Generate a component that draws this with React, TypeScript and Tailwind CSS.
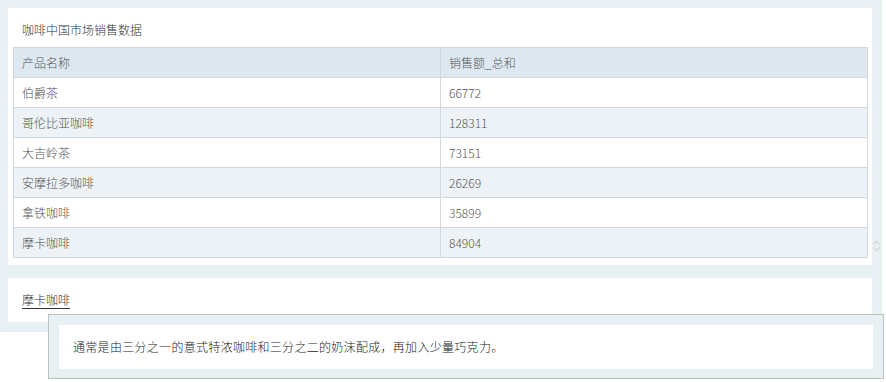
import React from "react";

const rows: [string, string][] = [
  ["伯爵茶", "66772"],
  ["哥伦比亚咖啡", "128311"],
  ["大吉岭茶", "73151"],
  ["安摩拉多咖啡", "26269"],
  ["拿铁咖啡", "35899"],
  ["摩卡咖啡", "84904"],
];

const font = { fontFamily: '"Noto Sans CJK SC", "Noto Sans", sans-serif' };

export default function App() {
  return (
    <div className="relative w-[886px] h-[382px] bg-white text-[12px] font-light" style={font}>
      <div className="w-[882px] bg-[#e9f0f3] pt-[8px] pl-[8px] pr-[10px] pb-[10px] flex flex-col gap-[13px]">
        <div className="bg-white pl-[5px] pr-[4px] pb-[7px]">
          <div className="h-[39px] flex items-center pl-[9px] text-[#333] pt-[5px]">咖啡中国市场销售数据</div>
          <table className="w-[855px] border-collapse table-fixed text-[#555]">
            <colgroup>
              <col className="w-[427px]" />
              <col />
            </colgroup>
            <thead>
              <tr className="h-[30px] bg-[#dee8f1]">
                <th className="border border-[#d1d9de] text-left font-light pl-[8px]">产品名称</th>
                <th className="border border-[#d1d9de] text-left font-light pl-[8px]">销售额_总和</th>
              </tr>
            </thead>
            <tbody>
              {rows.map(([n, v], i) => (
                <tr key={n} className={i % 2 === 0 ? "h-[30px] bg-white" : "h-[30px] bg-[#edf2f6]"}>
                  <td className="border border-[#d1d9de] pl-[8px]">{n}</td>
                  <td className="border border-[#d1d9de] pl-[8px]">{v}</td>
                </tr>
              ))}
            </tbody>
          </table>
        </div>
        <div className="bg-white h-[44px] flex items-center pl-[14px] text-[#333]">
          <span className="underline underline-offset-[3px]">摩卡咖啡</span>
        </div>
      </div>
      <div className="absolute left-[872px] top-[240px] w-[8px] flex flex-col items-center gap-[2px]">
        <svg width="7" height="5" viewBox="0 0 7 5"><path d="M0.5 4.5 L3.5 1 L6.5 4.5" fill="none" stroke="#c5c9cc" strokeWidth="1" /></svg>
        <svg width="7" height="5" viewBox="0 0 7 5"><path d="M0.5 0.5 L3.5 4 L6.5 0.5" fill="none" stroke="#c5c9cc" strokeWidth="1" /></svg>
      </div>
      <div className="absolute left-[48px] top-[314px] w-[836px] h-[65px] border border-[#b8c2bf] bg-[#e9f0f3] pt-[10px] pl-[10px] pr-[10px] pb-[9px]">
        <div className="bg-white h-[44px] flex items-center pl-[14px] text-[#222] tracking-[0.3px]">
          通常是由三分之一的意式特浓咖啡和三分之二的奶沫配成，再加入少量巧克力。
        </div>
      </div>
    </div>
  );
}
